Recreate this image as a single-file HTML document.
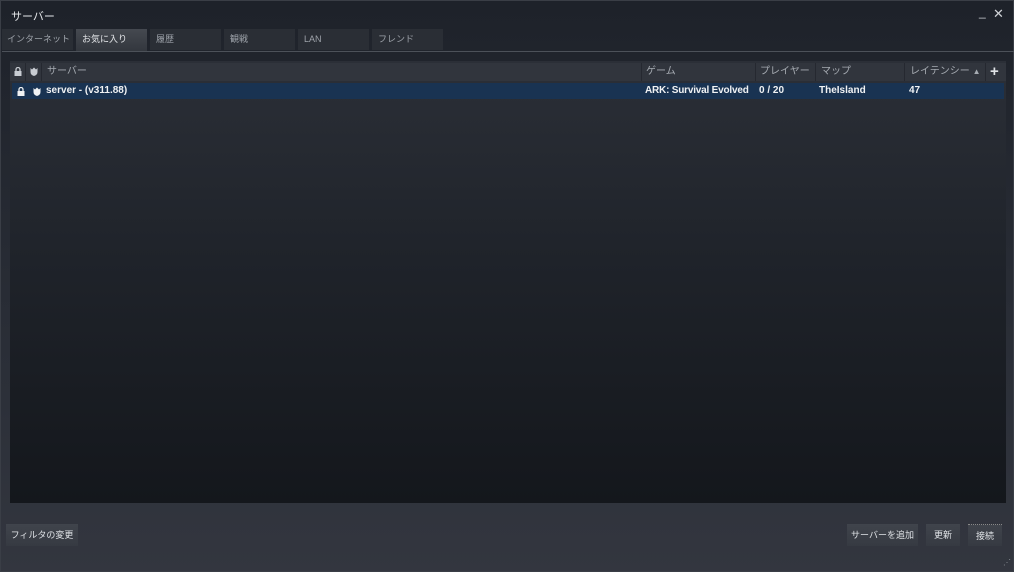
<!DOCTYPE html><html><head><meta charset="utf-8"><style>
*{margin:0;padding:0;box-sizing:border-box;white-space:nowrap}
body{width:1014px;height:572px;overflow:hidden;font-family:"Liberation Sans","Noto Sans CJK JP",sans-serif;font-size:10px;color:#c8ccd2;background:linear-gradient(#1e222a,#2c3039 70%,#33363f);position:relative;border:1px solid #3a3e46}
.a{position:absolute}
.tab{position:absolute;top:28px;height:21px;width:71px;background:#2a2e35;color:#9ea3aa;padding:0 0 0 6px;line-height:20px;font-size:9px;overflow:hidden}
.tab.on{background:linear-gradient(#454950,#33373e);color:#e2e4e7}
.btn{position:absolute;top:523px;height:22px;background:linear-gradient(#40444c,#363a42);color:#dfe2e6;font-size:9px;text-align:center;line-height:22px}
.hd{position:absolute;top:62px;height:18px;line-height:18px;color:#a6abb2;font-size:10px}
.rw{position:absolute;top:82px;height:16px;line-height:16px;color:#f0f2f4;font-weight:bold;font-size:10px}
.sep{position:absolute;top:62px;width:1px;height:18px;background:#252830}
</style></head><body>
<div class="a" style="left:10px;top:7px;color:#e6e8eb;font-size:11px">サーバー</div>
<div class="a" style="left:978px;top:4px;color:#c8ccd2;font-size:12px">_</div>
<div class="a" style="left:992px;top:5px;color:#d0d3d7;font-size:13px">✕</div>
<div class="tab" style="left:1px;padding-left:5px">インターネット</div>
<div class="tab on" style="left:75px;height:22px">お気に入り</div>
<div class="tab" style="left:149px">履歴</div>
<div class="tab" style="left:223px">観戦</div>
<div class="tab" style="left:297px">LAN</div>
<div class="tab" style="left:371px">フレンド</div>
<div class="a" style="left:1px;top:50px;width:1012px;height:1px;background:#4c5159"></div>
<div class="a" style="left:9px;top:60px;width:996px;height:442px;background:linear-gradient(#2b2f37,#1f232a 45%,#14171c)"></div>
<div class="a" style="left:9px;top:62px;width:996px;height:18px;background:#31353d"></div>
<div class="sep" style="left:24px"></div><div class="sep" style="left:40px"></div><div class="sep" style="left:640px"></div><div class="sep" style="left:754px"></div><div class="sep" style="left:814px"></div><div class="sep" style="left:903px"></div><div class="sep" style="left:984px"></div>
<svg class="a" style="left:13px;top:66px" width="8" height="9"><rect x="0.5" y="4" width="7" height="5" fill="#c8ccd2"/><path d="M2 4V2.5a2 2 0 0 1 4 0V4" stroke="#c8ccd2" fill="none" stroke-width="1.3"/></svg>
<svg class="a" style="left:29px;top:66px" width="8" height="9"><path d="M0.5 1L2 2.5 4 0.5 6 2.5 7.5 1V5Q7.5 8 4 9 0.5 8 0.5 5Z" fill="#c8ccd2"/></svg>
<div class="hd" style="left:46px">サーバー</div>
<div class="hd" style="left:645px">ゲーム</div>
<div class="hd" style="left:759px">プレイヤー</div>
<div class="hd" style="left:820px">マップ</div>
<div class="hd" style="left:909px">レイテンシー <span style="font-size:8px">▲</span></div>
<div class="hd" style="left:989px;color:#e0e3e6;font-size:15px;font-weight:bold">+</div>
<div class="a" style="left:11px;top:82px;width:992px;height:16px;background:#193352"></div>
<svg class="a" style="left:16px;top:86px" width="8" height="9"><rect x="0.5" y="4" width="7" height="5" fill="#f0f2f4"/><path d="M2 4V2.5a2 2 0 0 1 4 0V4" stroke="#f0f2f4" fill="none" stroke-width="1.3"/></svg>
<svg class="a" style="left:32px;top:86px" width="8" height="9"><path d="M0.5 1L2 2.5 4 0.5 6 2.5 7.5 1V5Q7.5 8 4 9 0.5 8 0.5 5Z" fill="#f0f2f4"/></svg>
<div class="rw" style="left:45px">server - (v311.88)</div>
<div class="rw" style="left:644px;letter-spacing:-0.2px">ARK: Survival Evolved</div>
<div class="rw" style="left:758px">0 / 20</div>
<div class="rw" style="left:818px">TheIsland</div>
<div class="rw" style="left:908px">47</div>
<div class="btn" style="left:5px;width:72px">フィルタの変更</div>
<div class="btn" style="left:846px;width:71px">サーバーを追加</div>
<div class="btn" style="left:925px;width:34px">更新</div>
<div class="btn" style="left:967px;width:34px;border-top:1px dotted #888">接続</div>
<div class="a" style="left:1002px;top:557px;color:#8a8f96;font-size:8px">⋰</div>
</body></html>
